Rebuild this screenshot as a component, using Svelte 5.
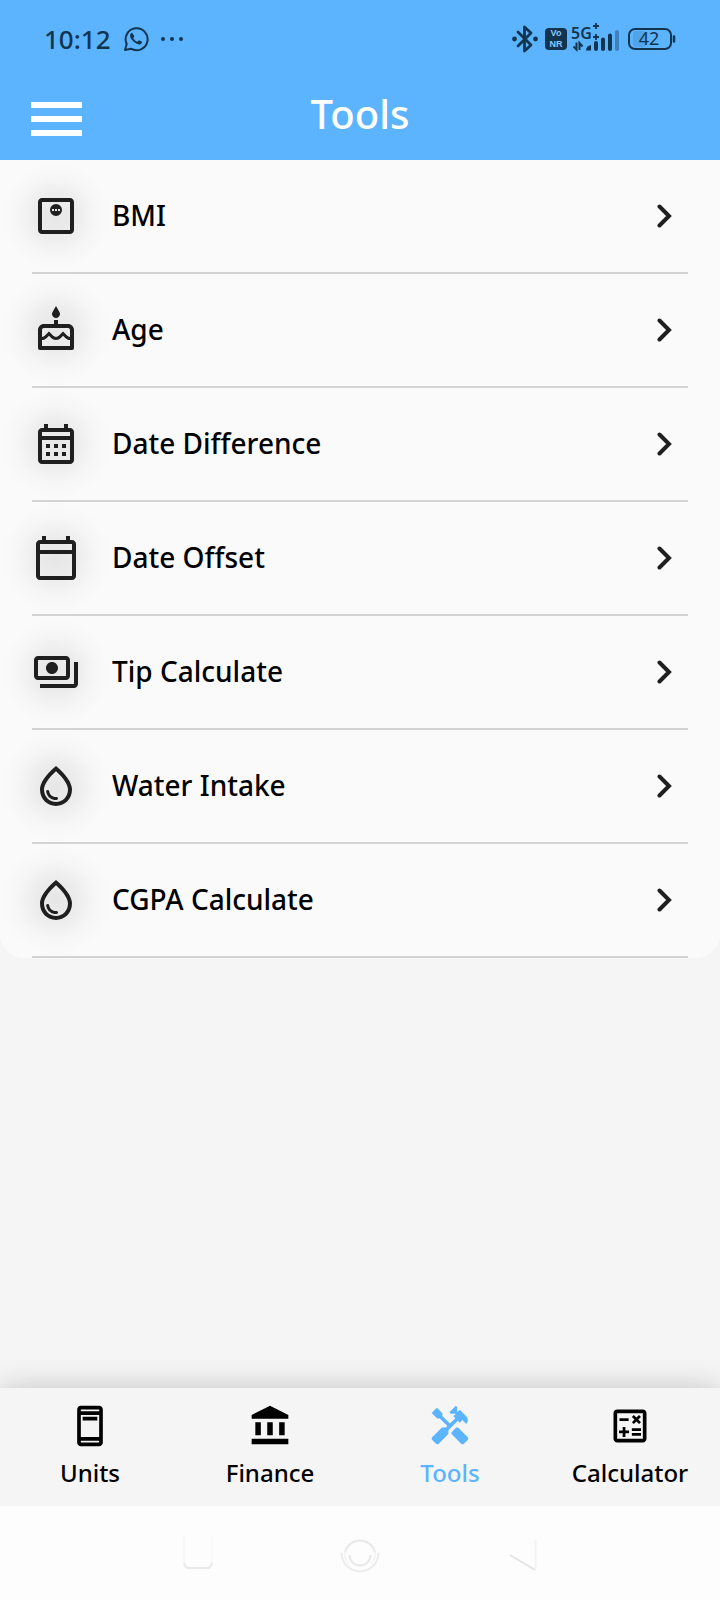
<script lang="ts">
    interface Item {
        label: string;
        icon: string;
    }

    const drop =
        "M12 2c-5.33 4.55-8 8.48-8 11.8 0 4.98 3.8 8.2 8 8.2s8-3.22 8-8.2c0-3.32-2.67-7.25-8-11.8zm0 18c-3.35 0-6-2.57-6-6.2 0-2.34 1.95-5.44 6-9.14 4.05 3.7 6 6.79 6 9.14 0 3.63-2.65 6.2-6 6.2zm-4.17-6c.37 0 .67.26.74.62.41 2.22 2.28 2.98 3.64 2.87.43-.02.79.32.79.75 0 .4-.32.73-.72.75-2.13.13-4.62-1.09-5.19-4.12-.08-.45.28-.87.74-.87z";

    const tools: Item[] = [
        {
            label: "BMI",
            icon: "M19 3H5c-1.1 0-2 .9-2 2v14c0 1.1.9 2 2 2h14c1.1 0 2-.9 2-2V5c0-1.1-.9-2-2-2zm0 16H5V5h14v14zM12 6a3 3 0 1 0 0 6 3 3 0 0 0 0-6zM10 8.5h1v1h-1zM11.5 8.5h1v1h-1zM13 8.5h1v1h-1z",
        },
        {
            label: "Age",
            icon: "M12 6c1.11 0 2-.9 2-2 0-.38-.1-.73-.29-1.03L12 0l-1.71 2.97c-.19.3-.29.65-.29 1.03 0 1.1.9 2 2 2zm6 3h-5V7h-2v2H6c-1.66 0-3 1.34-3 3v9c0 .55.45 1 1 1h16c.55 0 1-.45 1-1v-9c0-1.66-1.34-3-3-3zm1 11H5v-3c.9-.01 1.76-.37 2.4-1.01l1.09-1.07 1.07 1.07c1.31 1.31 3.59 1.3 4.89 0l1.08-1.07 1.07 1.07c.64.64 1.5 1 2.4 1.01v3zm0-4.5c-.51-.01-.99-.2-1.35-.57l-2.13-2.13-2.14 2.13c-.74.74-2.03.74-2.77 0L8.48 12.8l-2.14 2.13c-.35.36-.83.56-1.34.57V12c0-.55.45-1 1-1h12c.55 0 1 .45 1 1v3.5z",
        },
        {
            label: "Date Difference",
            icon: "M19 4h-1V2h-2v2H8V2H6v2H5c-1.1 0-2 .9-2 2v14c0 1.1.9 2 2 2h14c1.1 0 2-.9 2-2V6c0-1.1-.9-2-2-2zm0 16H5V10h14v10zm0-12H5V6h14v2zM7 12h2v2H7zM11 12h2v2h-2zM15 12h2v2h-2zM7 16h2v2H7zM11 16h2v2h-2zM15 16h2v2h-2z",
        },
        {
            label: "Date Offset",
            icon: "M20 3h-1V1h-2v2H7V1H5v2H4c-1.1 0-2 .9-2 2v16c0 1.1.9 2 2 2h16c1.1 0 2-.9 2-2V5c0-1.1-.9-2-2-2zm0 18H4V10h16v11zm0-13H4V5h16v3z",
        },
        {
            label: "Tip Calculate",
            icon: "M19 14V6c0-1.1-.9-2-2-2H3c-1.1 0-2 .9-2 2v8c0 1.1.9 2 2 2h14c1.1 0 2-.9 2-2zm-2 0H3V6h14v8zm-7-7c-1.66 0-3 1.34-3 3s1.34 3 3 3 3-1.34 3-3-1.34-3-3-3zm13 0v11c0 1.1-.9 2-2 2H4v-2h17V7h2z",
        },
        { label: "Water Intake", icon: drop },
        { label: "CGPA Calculate", icon: drop },
    ];

    const tabs: Item[] = [
        {
            label: "Units",
            icon: "M17 1H7c-1.1 0-2 .9-2 2v18c0 1.1.9 2 2 2h10c1.1 0 2-.9 2-2V3c0-1.1-.9-2-2-2zm0 20H7v-1h10v1zm0-3H7V6h10v12zm0-14H7V3h10v1zM8 7h8v2H8z",
        },
        {
            label: "Finance",
            icon: "M4 10h3v7H4zM10.5 10h3v7h-3zM2 19h20v3H2zM17 10h3v7h-3zM12 1 2 6v2h20V6z",
        },
        {
            label: "Tools",
            icon: "M21.67 18.17l-5.3-5.3h-.99l-2.54 2.54v.99l5.3 5.3c.39.39 1.02.39 1.41 0l2.12-2.12c.39-.38.39-1.02 0-1.41zM17.34 10.19l1.41-1.41 2.12 2.12c1.17-1.17 1.17-3.07 0-4.24l-3.54-3.54-1.41 1.41V1.71L15.22 1l-3.54 3.54.71.71h2.83l-1.41 1.41 1.06 1.06-2.89 2.89-4.13-4.13V5.06L4.83 2.04 2 4.87 5.03 7.9h1.41l4.13 4.13-.85.85H7.6l-5.3 5.3c-.39.39-.39 1.02 0 1.41l2.12 2.12c.39.39 1.02.39 1.41 0l5.3-5.3v-2.12l5.15-5.15 1.06 1.05z",
        },
        {
            label: "Calculator",
            icon: "M19 3H5c-1.1 0-2 .9-2 2v14c0 1.1.9 2 2 2h14c1.1 0 2-.9 2-2V5c0-1.1-.9-2-2-2zm0 16H5V5h14v14zM6.25 7.72h5v1.5h-5zM13 15.75h5v1.5h-5zM13 13.25h5v1.5h-5zM8 18h1.5v-2h2v-1.5h-2v-2H8v2H6V16h2zM14.09 10.95l1.41-1.41 1.41 1.41 1.06-1.06-1.41-1.42 1.41-1.41L16.91 6 15.5 7.41 14.09 6l-1.06 1.06 1.41 1.41-1.41 1.42z",
        },
    ];

    let active = $state("Tools");
</script>

<div class="screen">
    <header class="header">
        <div class="status">
            <span class="status__time">10:12</span>
            <svg width="26" height="26" viewBox="0 0 26 26" aria-hidden="true">
                <path d="M2 24l1.7-6A11 11 0 1 1 8 22.7z" fill="none" stroke="currentColor" stroke-width="2" stroke-linejoin="round" />
                <path d="M9.5 7.2c-.6-.5-1.6-.2-2.2 1-.8 1.7.2 4.2 2.2 6.4 2.3 2.5 5.2 4.2 7.2 3.8 1.7-.4 2.5-1.6 2.2-2.6l-2.8-1.5-1.7 1.5c-2-.8-3.3-2.1-4.1-3.9l1-1.7z" fill="currentColor" />
            </svg>
            <svg width="22" height="6" viewBox="0 0 22 6" aria-hidden="true">
                <g fill="currentColor">
                    <circle cx="2" cy="3" r="2" />
                    <circle cx="11" cy="3" r="2" />
                    <circle cx="20" cy="3" r="2" />
                </g>
            </svg>
            <div class="status__right">
                <svg width="26" height="30" viewBox="0 0 26 30" aria-hidden="true">
                    <path d="M6 8l13 13-6.5 6V3l6.5 6L6 22" fill="none" stroke="currentColor" stroke-width="2.8" stroke-linejoin="round" stroke-linecap="round" />
                    <circle cx="2.5" cy="15" r="2.4" fill="currentColor" />
                    <circle cx="23.5" cy="15" r="2.4" fill="currentColor" />
                </svg>
                <span class="status__vonr"><span>Vo</span><span>NR</span></span>
                <svg width="50" height="34" viewBox="0 0 50 34">
                    <text x="1" y="17" class="status__net">5G</text>
                    <path d="M26 1v6M23 4h6M26 12v6M23 15h6" stroke="currentColor" stroke-width="1.8" />
                    <path d="M6.5 20.5v7L3.5 24.5M9.5 28v-7l3 3.5" fill="none" stroke="currentColor" stroke-width="2" />
                    <path d="M16 28.5c0-3 2-5 5-5.5v5.5z" fill="currentColor" />
                    <path d="M26 21v6M33 17.5v9.5M40 13.5v13.5" stroke="currentColor" stroke-width="4" stroke-linecap="round" />
                    <path d="M47 10v17" stroke="currentColor" stroke-width="4" stroke-linecap="round" opacity=".4" />
                </svg>
                <svg width="48" height="30" viewBox="0 0 48 30">
                    <rect x="5" y="7" width="13" height="16" rx="3" fill="currentColor" opacity=".12" />
                    <rect x="1" y="5" width="42" height="20" rx="6" fill="none" stroke="currentColor" stroke-width="2" />
                    <path d="M46 12.5v5" stroke="currentColor" stroke-width="2.5" stroke-linecap="round" />
                    <text x="21" y="21" text-anchor="middle" class="status__battery">42</text>
                </svg>
            </div>
        </div>
        <div class="appbar">
            <button class="appbar__menu" aria-label="Menu">
                <svg width="52" height="34" viewBox="0 0 52 34" aria-hidden="true">
                    <path d="M1 3h51M1 17h51M1 31h51" stroke="currentColor" stroke-width="6" />
                </svg>
            </button>
            <h1>Tools</h1>
        </div>
    </header>

    <main>
        <ul class="tools">
            {#each tools as tool}
                <li>
                    <a class="tools__row" href="#tool">
                        <span class="tools__icon">
                            <svg width="48" height="48" viewBox="0 0 24 24" aria-hidden="true">
                                <path d={tool.icon} fill="currentColor" fill-rule="evenodd" />
                            </svg>
                        </span>
                        <span class="tools__label">{tool.label}</span>
                        <svg class="tools__chevron" width="24" height="24" viewBox="0 0 24 24" aria-hidden="true">
                            <path d="M7.5 2.5 17 12l-9.5 9.5" fill="none" stroke="currentColor" stroke-width="4" stroke-linecap="round" />
                        </svg>
                    </a>
                </li>
            {/each}
        </ul>
    </main>

    <nav class="tabs">
        {#each tabs as tab}
            <button class:active={active === tab.label} onclick={() => (active = tab.label)}>
                <svg width="44" height="44" viewBox="0 0 24 24" aria-hidden="true">
                    <path d={tab.icon} fill="currentColor" />
                </svg>
                <span>{tab.label}</span>
            </button>
        {/each}
    </nav>

    <div class="sysnav">
        <button aria-label="Recent apps">
            <svg width="40" height="40" viewBox="0 0 40 40">
                <path d="M6 2v26M34 2v26" fill="none" stroke="#f8f8f8" stroke-width="2" />
                <path d="M6 28q1 5 5 5h18q4 0 5-5" fill="none" stroke="#e9e9e9" stroke-width="2" />
            </svg>
        </button>
        <button aria-label="Home">
            <svg width="40" height="40" viewBox="0 0 40 40">
                <g fill="none" stroke="#e9e9e9" stroke-width="2">
                    <path d="M5 17a15.5 15.5 0 0 1 30 0" />
                    <path d="M1.5 18a18.5 18.5 0 1 0 37 0" stroke="#ececec" />
                    <path d="M9.5 20a10.5 10.5 0 0 0 21 0" />
                    <path d="M5 17q-1 6 3 11M35 17q1 6-3 11" stroke="#f5f5f5" />
                </g>
            </svg>
        </button>
        <button aria-label="Back">
            <svg width="40" height="40" viewBox="0 0 40 40">
                <path d="M33.5 5v29" stroke="#f3f3f3" stroke-width="2" />
                <path d="M8 20l25 15" stroke="#e4e4e4" stroke-width="2" />
            </svg>
        </button>
    </div>
</div>

<style>
    :global(body) {
        margin: 0;
        background: #f5f5f5;
    }

    .screen {
        min-height: 100vh;
        display: flex;
        flex-direction: column;
        font-family: "Noto Sans", sans-serif;
        font-weight: 500;
        color: #000000;
    }
    button {
        appearance: none;
        border: none;
        padding: 0;
        background: transparent;
        color: inherit;
        font: inherit;
        cursor: pointer;
    }
    svg {
        display: block;
        flex: none;
    }

    .header {
        background: #5cb4ff;
    }
    .status {
        display: flex;
        align-items: center;
        height: 78px;
        padding: 0 44px;
        color: #12344f;
        gap: 12px;
    }
    .status__time {
        font-size: 26px;
        line-height: 32px;
    }
    .status__right {
        display: flex;
        align-items: center;
        margin-left: auto;
    }
    .status__vonr {
        display: flex;
        flex-direction: column;
        align-items: center;
        justify-content: center;
        width: 22px;
        height: 22px;
        margin: 0 3px 0 7px;
        border-radius: 4px;
        background: #12344f;
        color: #8cc8fb;
        font-family: "Liberation Sans", sans-serif;
        font-size: 9px;
        line-height: 11px;
        font-weight: 700;
    }
    .status__right svg:last-child {
        margin-left: 8px;
    }
    .status__net {
        font-size: 16px;
        font-weight: 600;
        fill: currentColor;
    }
    .status__battery {
        font-size: 18px;
        font-weight: 400;
        fill: currentColor;
    }

    .appbar {
        display: grid;
        grid-template-columns: 1fr auto 1fr;
        align-items: center;
        height: 82px;
        padding: 0 30px;
        color: #ffffff;
    }
    .appbar__menu {
        justify-self: start;
    }
    .appbar h1 {
        margin: 0;
        padding-bottom: 10px;
        font-size: 40px;
        line-height: 48px;
        font-weight: 500;
    }

    .tools {
        list-style: none;
        margin: 0;
        padding: 0 32px;
        background: #fafafa;
        border-radius: 0 0 24px 24px;
    }
    .tools li {
        border-bottom: 2px solid #d3d3d3;
    }
    .tools__row {
        display: flex;
        align-items: center;
        gap: 32px;
        height: 112px;
        padding-right: 12px;
        color: inherit;
        text-decoration: none;
        font-size: 28px;
        line-height: 36px;
    }
    .tools__label {
        padding-bottom: 2px;
    }
    .tools__icon {
        position: relative;
        color: #1f1f1f;
    }
    .tools__icon::before {
        content: "";
        position: absolute;
        inset: -32px;
        background: radial-gradient(circle closest-side, rgba(0, 0, 0, 0.08), rgba(0, 0, 0, 0.06) 35%, rgba(0, 0, 0, 0.015) 70%, transparent);
    }
    .tools__icon svg {
        position: relative;
    }
    .tools__chevron {
        margin-left: auto;
        color: #1f1f1f;
    }

    .tabs {
        display: grid;
        grid-template-columns: repeat(4, 1fr);
        margin-top: auto;
        background: #f5f5f5;
        box-shadow: 0 0 28px rgba(0, 0, 0, 0.2);
    }
    .tabs button {
        display: flex;
        flex-direction: column;
        align-items: center;
        gap: 9px;
        padding: 16px 0 17px;
        font-size: 24px;
        line-height: 32px;
    }
    .tabs .active {
        color: #5cb4ff;
    }

    .sysnav {
        position: relative;
        display: flex;
        align-items: center;
        justify-content: center;
        gap: 122px;
        box-sizing: border-box;
        height: 94px;
        padding-top: 4px;
        background: #fdfdfd;
    }
</style>
